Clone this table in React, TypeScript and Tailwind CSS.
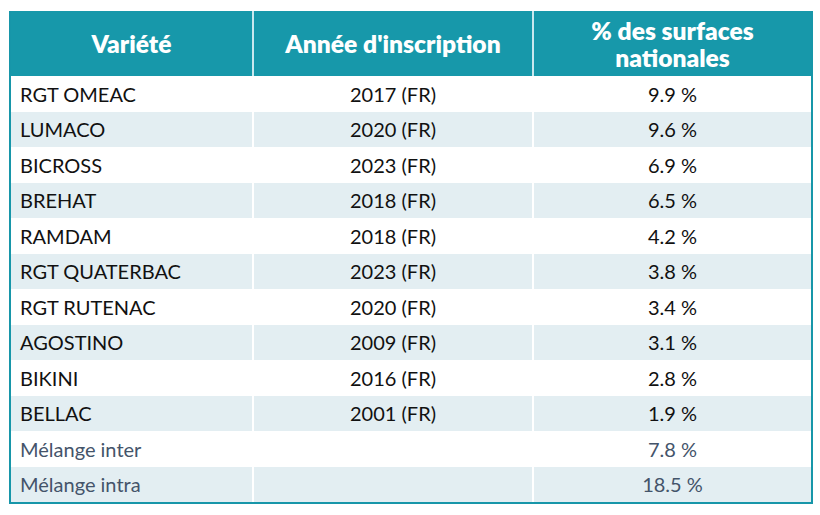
const rows = [
  { name: 'RGT OMEAC', year: '2017 (FR)', pct: '9.9 %' },
  { name: 'LUMACO', year: '2020 (FR)', pct: '9.6 %' },
  { name: 'BICROSS', year: '2023 (FR)', pct: '6.9 %' },
  { name: 'BREHAT', year: '2018 (FR)', pct: '6.5 %' },
  { name: 'RAMDAM', year: '2018 (FR)', pct: '4.2 %' },
  { name: 'RGT QUATERBAC', year: '2023 (FR)', pct: '3.8 %' },
  { name: 'RGT RUTENAC', year: '2020 (FR)', pct: '3.4 %' },
  { name: 'AGOSTINO', year: '2009 (FR)', pct: '3.1 %' },
  { name: 'BIKINI', year: '2016 (FR)', pct: '2.8 %' },
  { name: 'BELLAC', year: '2001 (FR)', pct: '1.9 %' },
  { name: 'Mélange inter', year: '', pct: '7.8 %', mix: true },
  { name: 'Mélange intra', year: '', pct: '18.5 %', mix: true },
]

export default function App() {
  return (
    <div className="w-[820px] h-[515px] bg-white pt-[11px] pl-[9px]" style={{ fontFamily: 'Lato, "Open Sans", sans-serif' }}>
      <div className="w-[804px] border-2 border-t-0 border-[#1796a9]">
        <div className="grid grid-cols-[243px_280px_277px] h-[65px] bg-[#1798aa] text-white font-extrabold text-[24.6px] leading-[27px]">
          <div className="flex items-center justify-center border-r-2 border-[#c9e8ee]">Variété</div>
          <div className="flex items-center justify-center border-r-2 border-[#c9e8ee]">Année d'inscription</div>
          <div className="flex items-center justify-center text-center">% des surfaces<br />nationales</div>
        </div>
        {rows.map((r, i) => (
          <div
            key={r.name}
            className={`grid grid-cols-[243px_280px_277px] h-[35.5px] text-[20px] ${i % 2 === 1 ? 'bg-[#e3eef2]' : 'bg-white'} ${r.mix ? 'text-[#44546a]' : 'text-[#111111]'}`}
          >
            <div className="flex items-center pl-[9px] border-r-2 border-white">{r.name}</div>
            <div className="flex items-center justify-center border-r-2 border-white">{r.year}</div>
            <div className="flex items-center justify-center">{r.pct}</div>
          </div>
        ))}
      </div>
    </div>
  )
}
